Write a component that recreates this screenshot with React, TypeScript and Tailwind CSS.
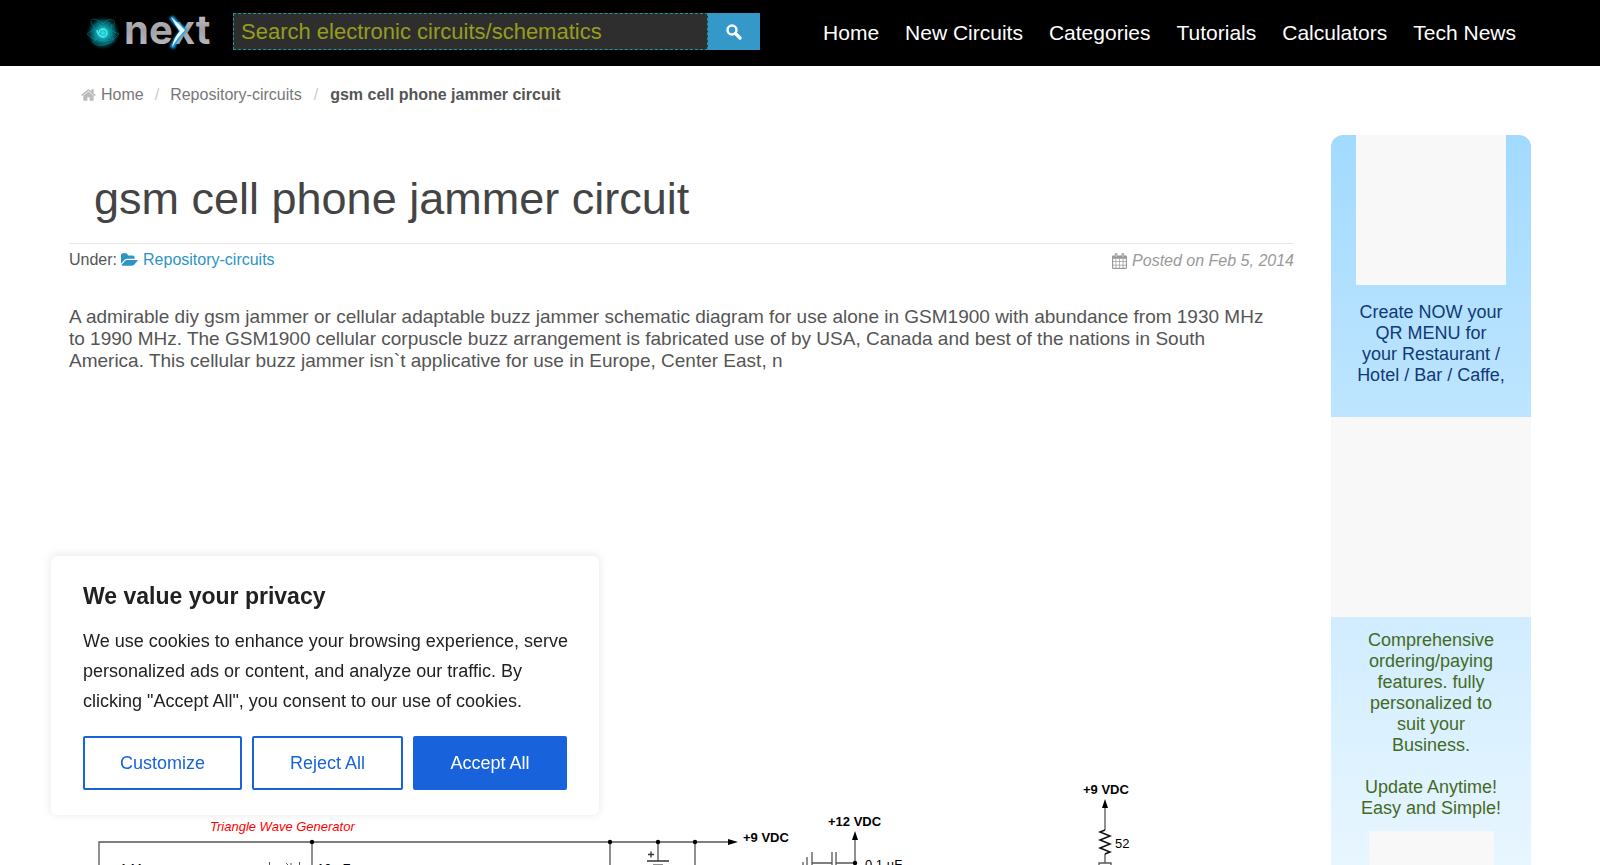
const navLinks = ["Home", "New Circuits", "Categories", "Tutorials", "Calculators", "Tech News"];

function Logo() {
  return (
    <svg viewBox="0 0 136 52" className="h-[52px] w-[136px] shrink-0" role="img" aria-label="next">
      <defs>
        <radialGradient id="orb">
          <stop offset="0" stopColor="#35e6ea" />
          <stop offset="0.35" stopColor="#0aa3ad" />
          <stop offset="0.7" stopColor="#076670" stopOpacity="0.8" />
          <stop offset="1" stopColor="#002022" stopOpacity="0" />
        </radialGradient>
        <linearGradient id="metal" x1="0" y1="0" x2="0" y2="1">
          <stop offset="0" stopColor="#cfcfd2" />
          <stop offset="0.5" stopColor="#a2a2a6" />
          <stop offset="1" stopColor="#c4c4c8" />
        </linearGradient>
        <filter id="glow" x="-50%" y="-50%" width="200%" height="200%">
          <feGaussianBlur stdDeviation="1.2" />
        </filter>
      </defs>
      <ellipse cx="23" cy="28" rx="17" ry="17" fill="url(#orb)" />
      <g fill="none" stroke="#12a7b2" strokeWidth="0.7" opacity="0.6">
        <path d="M12 20Q9 14 14 14Q20 15 23 19Q27 13 33 15Q36 17 33 22" />
        <path d="M7 29Q14 23 23 24T39 29Q33 37 23 36T7 29Z" />
        <path d="M12 36Q16 42 23 40T34 36" />
        <path d="M13 20Q17 28 14 37M32 19Q29 27 34 36M17 17Q24 23 31 34M30 17Q20 24 15 36" />
      </g>
      <path d="M19 28A4 4 0 1 1 23 32A7 7 0 0 1 17 25" fill="none" stroke="#6ff6f6" strokeWidth="1.3" opacity="0.8" />
      <text x="44" y="39" fontSize="40" fontWeight="700" fontFamily="Inter, sans-serif" fill="url(#metal)">next</text>
      <path d="M91 12Q97 20 104 25Q96 33 92 43" fill="none" stroke="#1b9fe8" strokeWidth="5" filter="url(#glow)" />
      <path d="M91 12Q98 18 105 25Q98 32 92 42Q94 32 100 26Q95 20 91 12Z" fill="#e8f8ff" />
    </svg>
  );
}

function HomeIcon() {
  return (
    <svg viewBox="0 0 1664 1792" className="h-4 w-[15px]" fill="#bbb" aria-hidden="true">
      <path d="M1408 992v480q0 26-19 45t-45 19H960v-384H704v384H320q-26 0-45-19t-19-45V992q0-1 .5-3t.5-3l575-474 575 474q1 2 1 6zm223-69l-62 74q-8 9-21 11h-3q-13 0-21-7L832 424 140 1001q-12 8-24 7-13-2-21-11l-62-74q-8-10-7-23.500T37 878l719-599q32-26 76-26t76 26l244 204V288q0-14 9-23t23-9h192q14 0 23 9t9 23v408l219 182q10 8 11 21.500t-7 23.500z" />
    </svg>
  );
}

function FolderOpenIcon() {
  return (
    <svg viewBox="0 0 1920 1792" className="h-4 w-[17px]" fill="currentColor" aria-hidden="true">
      <path d="M1879 952q0 31-31 66l-336 396q-43 51-120.500 86.500t-143.500 35.500h-1088q-34 0-60.500-13t-26.500-43q0-31 31-66l336-396q43-51 120.500-86.500t143.500-35.500h1088q34 0 60.500 13t26.500 43zm-343-344v160h-832q-94 0-197 47.500t-164 119.500l-337 396-5 6q0-4-.5-12.500t-.5-12.500v-960q0-92 66-158t158-66h320q92 0 158 66t66 158v32h544q92 0 158 66t66 158z" />
    </svg>
  );
}

function SearchIcon() {
  return (
    <svg viewBox="0 0 16 16" className="size-4" fill="none" stroke="currentColor" aria-hidden="true">
      <circle cx="6" cy="6" r="4.500" strokeWidth="2.400" />
      <path d="M9.500 9.500L14 14" strokeWidth="3.200" strokeLinecap="round" />
    </svg>
  );
}

function CalendarIcon() {
  return (
    <svg viewBox="0 0 16 17" className="h-4 w-[15px]" aria-hidden="true">
      <path
        fill="#999"
        fillRule="evenodd"
        d="M1.2 2.5H3V1.4a1.4 1.4 0 0 1 2.800 0V2.500H10.200V1.400a1.400 1.400 0 0 1 2.800 0V2.500H14.800A1.200 1.200 0 0 1 16 3.700V15.800A1.200 1.200 0 0 1 14.800 17H1.200A1.200 1.200 0 0 1 0 15.800V3.700A1.200 1.200 0 0 1 1.200 2.500ZM1.200 6.200V8.800H3.800V6.200ZM4.500 6.200V8.800H7.600V6.200ZM8.300 6.200V8.800H11.400V6.200ZM12.200 6.200V8.800H14.800V6.200ZM1.200 9.500V12.400H3.800V9.500ZM4.500 9.500V12.400H7.600V9.500ZM8.300 9.500V12.400H11.400V9.500ZM12.200 9.500V12.400H14.800V9.500ZM1.200 13.200V15.800H3.800V13.200ZM4.500 13.200V15.800H7.600V13.200ZM8.300 13.200V15.800H11.400V13.200ZM12.200 13.200V15.800H14.800V13.200Z"
      />
      <path d="M4.400 1.200V4.200M11.600 1.200V4.200" stroke="#fff" strokeWidth="0.7" />
    </svg>
  );
}

function SearchForm() {
  return (
    <form className="flex h-[37px] w-[527px]" onSubmit={(e) => e.preventDefault()}>
      <label htmlFor="q" className="sr-only">Search</label>
      <input
        id="q"
        type="text"
        placeholder="Search electronic circuits/schematics"
        className="min-w-0 flex-1 border border-dashed border-[#1a9a9c] bg-[#2e2e2e] px-[7px] text-[22px] text-[#979d1c] outline-none placeholder:text-[#979d1c]"
      />
      <button type="submit" aria-label="Search" className="flex w-[52px] items-center justify-center bg-[#3498c8] text-white">
        <SearchIcon />
      </button>
    </form>
  );
}

function Schematic() {
  return (
    <svg viewBox="69 765 1225 160" className="w-full" role="img" aria-label="gsm cell phone jammer circuit" fontFamily="'Liberation Sans', Arial, sans-serif" fontSize="13">
      <g fill="none" stroke="#555" strokeWidth="1.300">
        <path d="M99 925V842H730M312 842V925M610 842V925M658 842V861M695 842V925" />
        <path d="M647 861H669M648 854.500H654M651 851.500V857.500" stroke="#333" />
        <path d="M653 865H663" />
        <path d="M855 838V925M812 863H832M836 863H855M812 852V874M832 852V874M836 852V874M807 857V870M803 862V866" />
        <path d="M1105 806V830M1105 854V863M1099 925V863H1111V925" />
        <path d="M1105 830L1100 832L1110 836L1100 840L1110 844L1100 848L1110 852L1105 854" stroke="#111" strokeWidth="1.500" />
      </g>
      <g fill="#000">
        <circle cx="312" cy="842" r="2.200" />
        <circle cx="610" cy="842" r="2.200" />
        <circle cx="658" cy="842" r="2.200" />
        <circle cx="695" cy="842" r="2.200" />
        <circle cx="855" cy="863" r="2.200" />
        <path d="M738 842L728 839V845ZM855 831L852 840H858ZM1105 799L1102 808H1108Z" />
        <text x="743" y="842" fontWeight="bold">+9 VDC</text>
        <text x="828" y="826" fontWeight="bold">+12 VDC</text>
        <text x="1083" y="794" fontWeight="bold">+9 VDC</text>
        <text x="1115" y="848">52</text>
        <text x="865" y="869">0.1 µF</text>
        <text x="120" y="873">1 Meg</text>
        <text x="317" y="873">10 µF</text>
      </g>
      <path d="M269.500 862V880M286 863L289 866M291 863V880M299.500 862V880" stroke="#555" fill="none" />
      <text x="210" y="831" fill="#f00" fontStyle="italic">Triangle Wave Generator</text>
    </svg>
  );
}

function Sidebar() {
  return (
    <aside className="mr-[69px] w-[200px] shrink-0 self-start rounded-xl bg-linear-to-b from-[#a2daff] to-white pb-[160px] text-center text-[18px] leading-[21px]">
      <div className="mx-auto size-[150px] bg-[#f8f8f8]" />
      <p className="mt-[17px] h-[115px] px-[25px] text-[#0f3a75]">Create NOW your QR MENU for your Restaurant / Hotel / Bar / Caffe,</p>
      <div className="size-[200px] bg-[#f8f8f8]" />
      <p className="mt-[13px] px-[35px] text-[#446a1e]">Comprehensive ordering/paying features. fully personalized to suit your Business.</p>
      <p className="mt-[21px] px-[25px] text-[#446a1e]">Update Anytime! Easy and Simple!</p>
      <div className="mx-auto mt-3 size-[125px] bg-[#f8f8f8]" />
    </aside>
  );
}

function CookieBanner() {
  const base = "h-[54px] rounded-[2px] border-2 border-[#1863dc] text-center";
  return (
    <section aria-label="Cookie consent" className="fixed bottom-[50px] left-[51px] w-[548px] rounded-md bg-white px-8 pb-[25px] pt-6 text-[18px] text-[#212121] shadow-[0_-1px_10px_0_#acabab4d]">
      <h2 className="text-[23px] font-bold leading-8">We value your privacy</h2>
      <p className="-mr-2 mt-[14px] leading-[30px]">
        We use cookies to enhance your browsing experience, serve personalized ads or content, and analyze our traffic. By clicking "Accept All", you consent to our use of cookies.
      </p>
      <div className="mt-5 flex gap-[10px]">
        <button className={`${base} w-[159px] text-[#1863dc]`}>Customize</button>
        <button className={`${base} w-[151px] text-[#1863dc]`}>Reject All</button>
        <button className={`${base} flex-1 bg-[#1863dc] text-white`}>Accept All</button>
      </div>
    </section>
  );
}

export default function App() {
  return (
    <div className="h-screen overflow-hidden bg-white font-['Liberation_Sans',Arial,sans-serif] text-[#555]">
      <header className="flex h-[66px] items-start bg-black pl-20 pr-[84px]">
        <div className="pt-[5px]"><Logo /></div>
        <div className="ml-[17px] pt-[13px]"><SearchForm /></div>
        <nav className="ml-auto flex h-[66px] items-center gap-[26px] text-[21px] text-white">
          {navLinks.map((label) => (
            <a key={label} href="#" className="whitespace-nowrap">{label}</a>
          ))}
        </nav>
      </header>

      <nav aria-label="Breadcrumb" className="pl-[81px] pt-[17px]">
        <ol className="flex h-[23px] items-center text-base">
          <li><a href="#" className="flex items-center gap-[5px] text-[#777]"><HomeIcon />Home</a></li>
          <li className="mx-[11px] text-[#ccc]">/</li>
          <li><a href="#" className="text-[#777]">Repository-circuits</a></li>
          <li className="mx-3 text-[#ccc]">/</li>
          <li className="font-bold">gsm cell phone jammer circuit</li>
        </ol>
      </nav>

      <div className="mt-[29px] flex gap-[37px] pl-[69px]">
        <main className="min-w-0 flex-1">
          <h1 className="border-b border-[#e8e8e8] pb-[19px] pl-[25px] pt-[39px] text-[45px] leading-[50px] text-[#444]">gsm cell phone jammer circuit</h1>
          <div className="flex items-start justify-between pt-[6px] text-base leading-5">
            <p className="flex items-center gap-1">
              Under:
              <a href="#" className="flex items-center gap-[5px] text-[#2d94c6]"><FolderOpenIcon />Repository-circuits</a>
            </p>
            <p className="flex items-center gap-[5px] pt-px italic text-[#999]"><CalendarIcon />Posted on Feb 5, 2014</p>
          </div>
          <p className="mt-[35px] pr-4 text-[19px] leading-[22px]">
            A admirable diy gsm jammer or cellular adaptable buzz jammer schematic diagram for use alone in GSM1900 with abundance from 1930 MHz to 1990 MHz. The GSM1900 cellular corpuscle buzz arrangement is fabricated use of by USA, Canada and best of the nations in South America. This cellular buzz jammer isn`t applicative for use in Europe, Center East, n
          </p>
          <div className="pt-[393px]"><Schematic /></div>
        </main>
        <Sidebar />
      </div>

      <CookieBanner />
    </div>
  );
}
